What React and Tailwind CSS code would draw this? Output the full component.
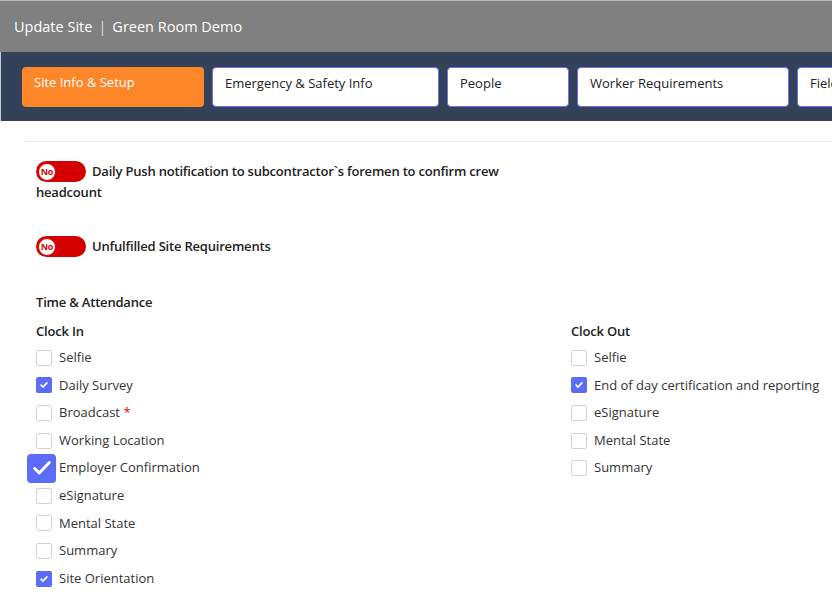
import React from "react";

const tabs = [
  { label: "Site Info & Setup", w: "w-[182px]", active: true },
  { label: "Emergency & Safety Info", w: "w-[227px]" },
  { label: "People", w: "w-[122px]" },
  { label: "Worker Requirements", w: "w-[212px]" },
  { label: "Field Reports", w: "w-[160px]" },
];

const clockIn = [
  { label: "Selfie" },
  { label: "Daily Survey", checked: true },
  { label: "Broadcast", required: true },
  { label: "Working Location" },
  { label: "Employer Confirmation", checked: true, focus: true },
  { label: "eSignature" },
  { label: "Mental State" },
  { label: "Summary" },
  { label: "Site Orientation", checked: true },
];

const clockOut = [
  { label: "Selfie" },
  { label: "End of day certification and reporting", checked: true },
  { label: "eSignature" },
  { label: "Mental State" },
  { label: "Summary" },
];

const Check = ({ checked, focus }) => {
  if (focus) {
    return (
      <span className="flex items-center justify-center w-[29px] h-[29px] -ml-[9px] -mr-[4px] rounded-[4px] bg-[#5b6cf6] shrink-0">
        <svg width="22" height="22" viewBox="0 0 24 24" fill="none" stroke="white" strokeWidth="3.2" strokeLinecap="round" strokeLinejoin="round">
          <path d="M4 12.5l5 5L20 6" />
        </svg>
      </span>
    );
  }
  if (checked) {
    return (
      <span className="flex items-center justify-center w-4 h-4 rounded-[2px] bg-[#5b6cf6] shrink-0">
        <svg width="10" height="10" viewBox="0 0 24 24" fill="none" stroke="white" strokeWidth="4" strokeLinecap="round" strokeLinejoin="round">
          <path d="M5 12.5l4.5 4.5L19 7" />
        </svg>
      </span>
    );
  }
  return <span className="w-4 h-4 rounded-[2px] border border-[#d4d4d8] bg-white shrink-0" />;
};

const CheckList = ({ title, items }) => (
  <div>
    <div className="text-[13px] font-[560] tracking-[-0.2px] text-[#222] h-[20px] leading-[20px] mb-[3px]">{title}</div>
    {items.map((it) => (
      <div key={it.label} className="flex items-center gap-[7px] h-[27.6px]">
        <Check checked={it.checked} focus={it.focus} />
        <span className="text-[13px] text-[#333]">
          {it.label}
          {it.required && <span className="text-[#e00000]"> *</span>}
        </span>
      </div>
    ))}
  </div>
);

const Toggle = () => (
  <span className="inline-flex items-center align-middle w-[50px] h-[21px] rounded-full bg-[#d40000] pl-[2px] mr-[6px] -mt-[2px]">
    <span className="flex items-center justify-center w-[18px] h-[18px] rounded-full bg-white border border-[#d40000] text-[9px] font-bold text-[#d40000] leading-none">
      No
    </span>
  </span>
);

export default function App() {
  return (
    <div className="w-[832px] h-[604px] overflow-hidden bg-white font-['Open_Sans',sans-serif]">
      <div className="h-[52px] bg-[#808080] border-t border-[#b8b8b8] flex items-center pl-[14px] text-white text-[14.5px]">
        <span>Update Site</span>
        <span className="mx-[6px] text-[#d8d8d8]">|</span>
        <span>Green Room Demo</span>
      </div>
      <div className="h-[69px] bg-[#334159] border-l border-[#c8ccd4] flex gap-[8px] pl-[21px] pt-[15px] overflow-hidden">
        {tabs.map((t) => (
          <div
            key={t.label}
            className={`${t.w} h-[40px] shrink-0 rounded-[4px] px-[12px] pt-[6px] text-[13px] ${
              t.active ? "bg-[#fd8628] text-white" : "bg-white text-[#222] border border-[#6b6ff0]"
            }`}
          >
            {t.label}
          </div>
        ))}
      </div>
      <div className="pl-[25px]">
        <div className="mt-[20px] border-t border-[#e5e7eb]" />
      </div>
      <div className="pl-[36px]">
        <div className="w-[475px] mt-[19px] text-[13px] font-[560] tracking-[-0.2px] leading-[20px] text-[#222]">
          <Toggle />
          Daily Push notification to subcontractor`s foremen to confirm crew headcount
        </div>
        <div className="mt-[34px] text-[13px] font-[560] tracking-[-0.2px] leading-[20px] text-[#222]">
          <Toggle />
          Unfulfilled Site Requirements
        </div>
        <div className="mt-[35px] text-[13px] font-[560] tracking-[-0.2px] leading-[20px] text-[#222]">Time &amp; Attendance</div>
        <div className="mt-[9px] grid grid-cols-[535px_1fr]">
          <CheckList title="Clock In" items={clockIn} />
          <CheckList title="Clock Out" items={clockOut} />
        </div>
      </div>
    </div>
  );
}
